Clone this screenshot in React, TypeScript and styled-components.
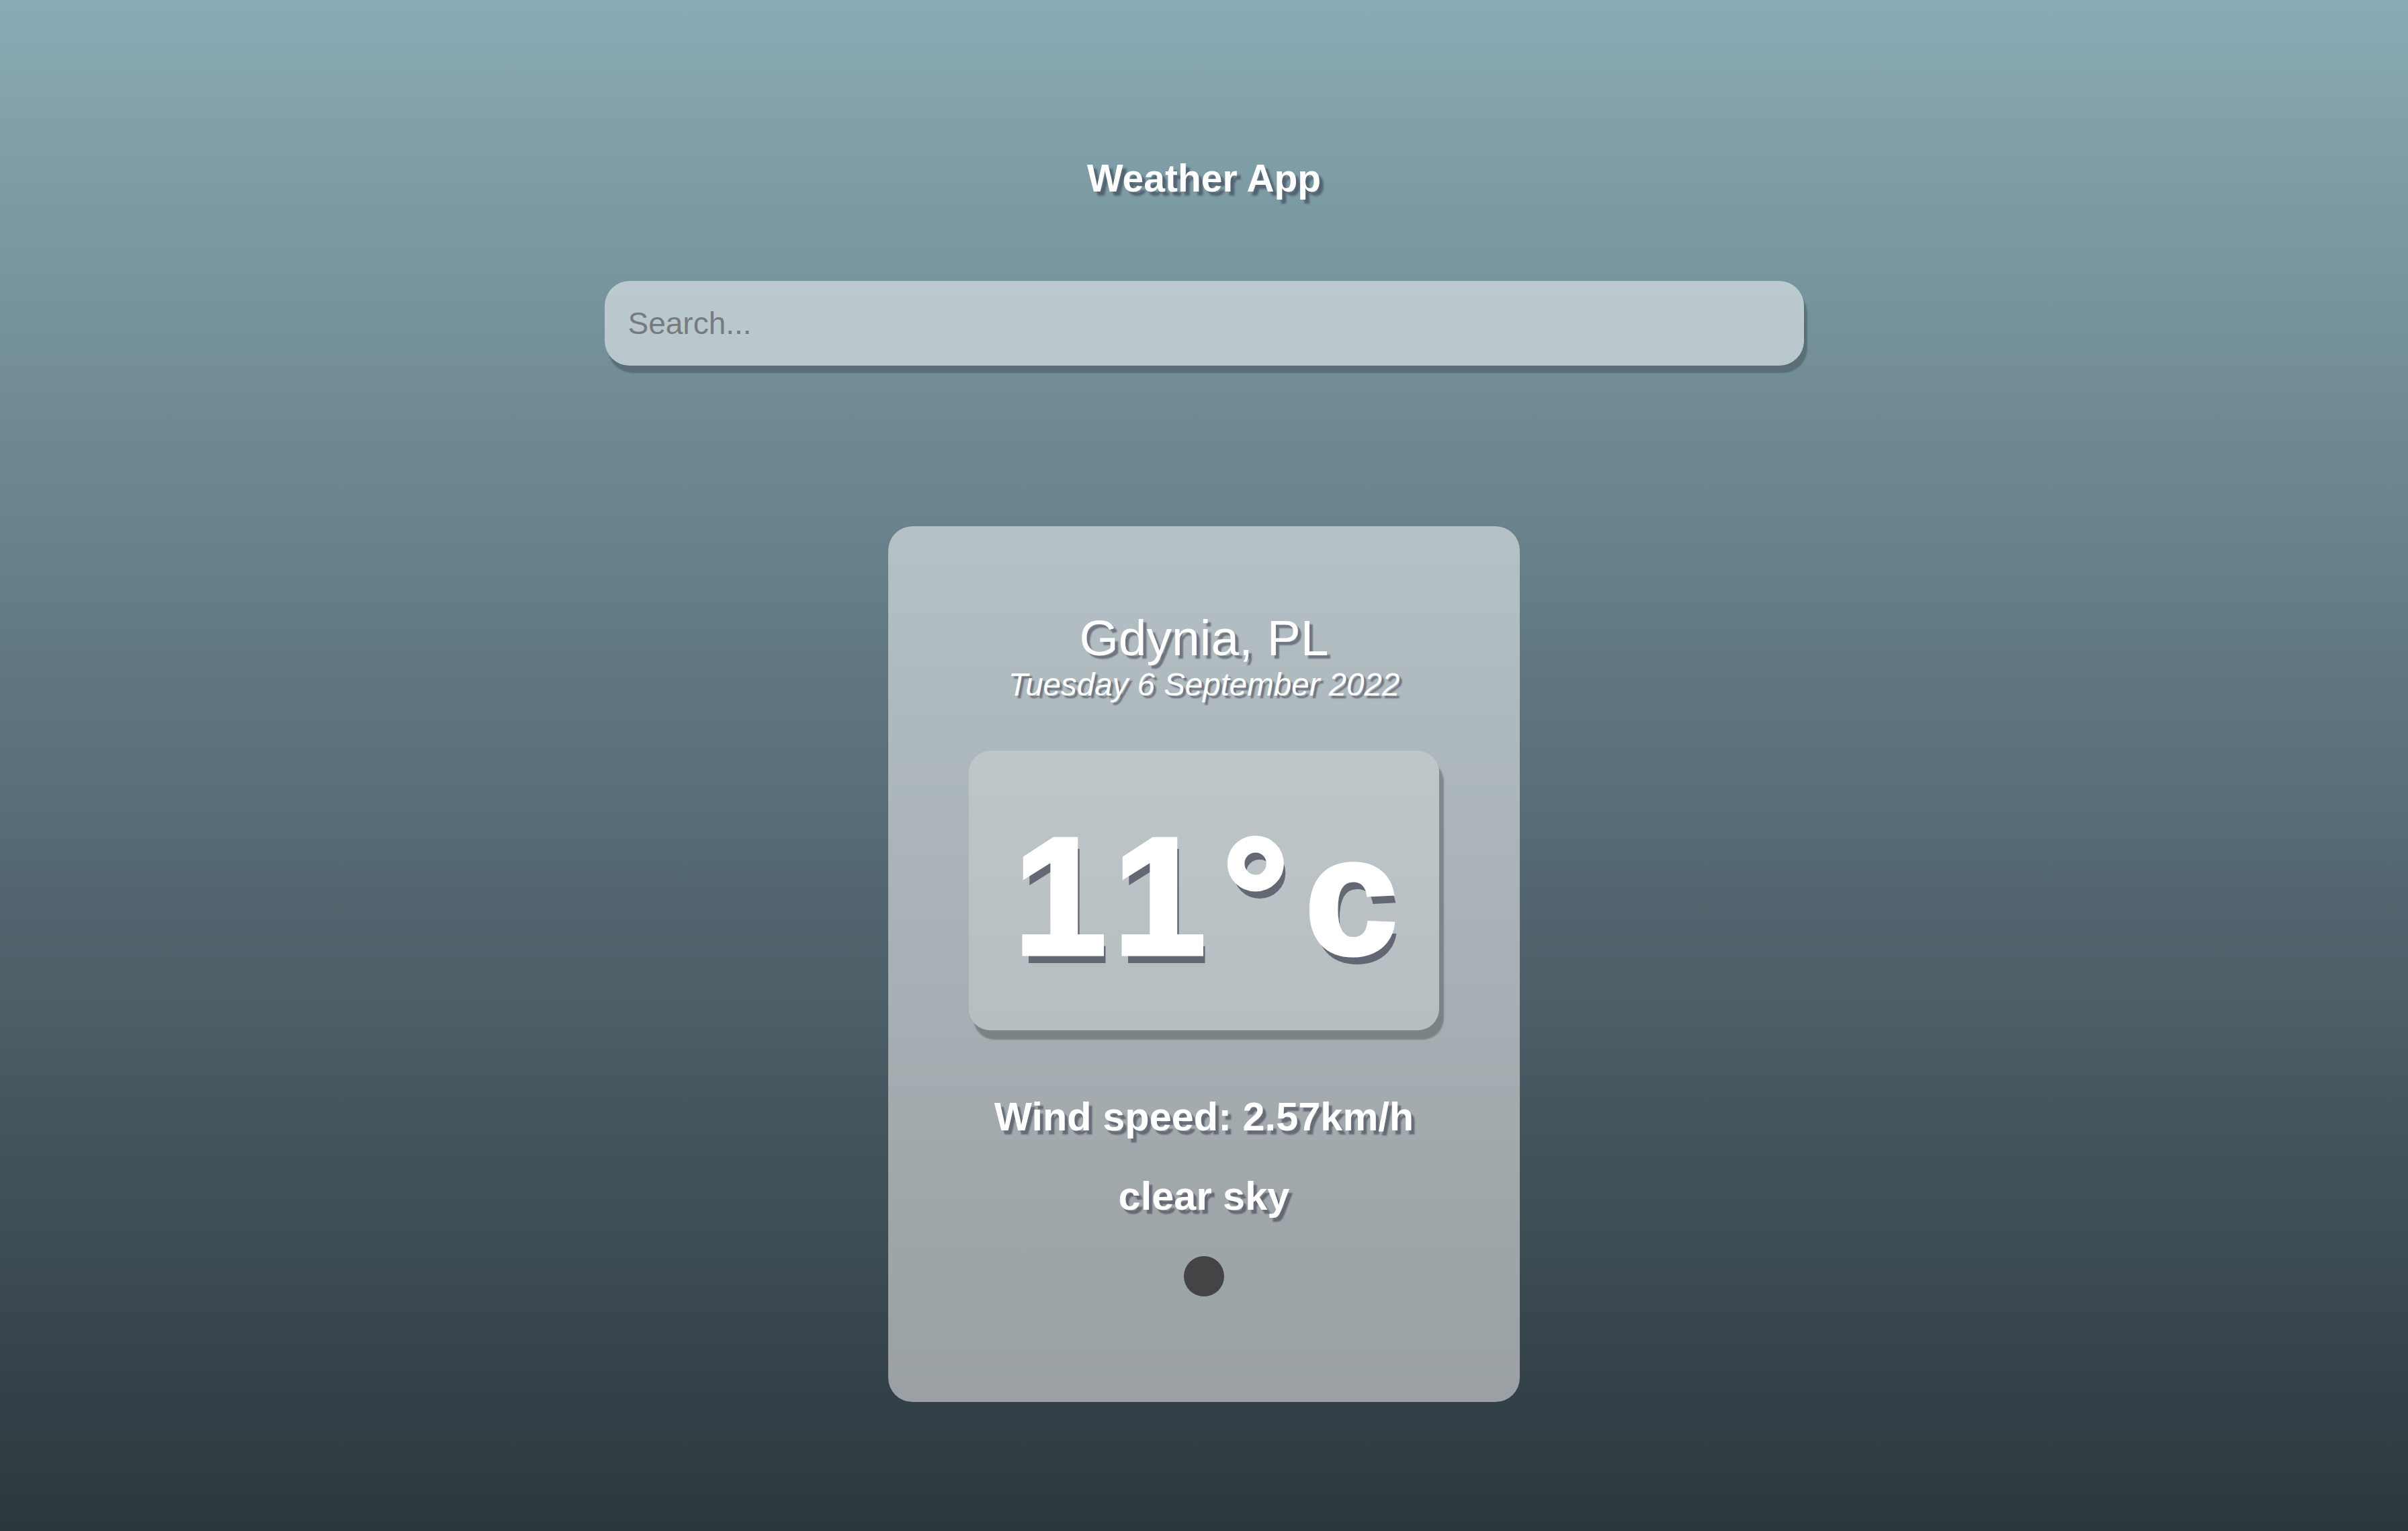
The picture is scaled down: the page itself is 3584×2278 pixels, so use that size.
import React from "react";
import styled, { createGlobalStyle } from "styled-components";

const GlobalStyle = createGlobalStyle`
  html, body {
    margin: 0;
    padding: 0;
  }
  body {
    font-family: "Liberation Sans", Arial, sans-serif;
    color: #ffffff;
  }
  * {
    box-sizing: border-box;
  }
`;

const Page = styled.main`
  min-height: 100vh;
  display: flex;
  flex-direction: column;
  align-items: center;
  padding-top: 232px;
  background: linear-gradient(180deg, #89aab4 0%, #2c363d 100%);
`;

const Title = styled.h1`
  margin: 0;
  font-size: 57px;
  line-height: 66px;
  font-weight: 700;
  color: #ffffff;
  text-shadow: 6px 6px 3px rgba(30, 30, 50, 0.45);
`;

const SearchInput = styled.input`
  margin-top: 120px;
  width: 1785px;
  height: 126px;
  border: none;
  outline: none;
  border-radius: 37px;
  padding: 0 35px;
  background: rgba(255, 255, 255, 0.5);
  box-shadow: 5px 11px 2px rgba(0, 0, 0, 0.22);
  font-family: "Liberation Sans", Arial, sans-serif;
  font-size: 46px;
  color: #333a40;

  &::placeholder {
    color: #777b80;
  }
`;

const Card = styled.section`
  margin-top: 239px;
  width: 940px;
  padding: 123px 120px 157px;
  border-radius: 36px;
  background: rgba(255, 255, 255, 0.5);
  display: flex;
  flex-direction: column;
  align-items: center;
`;

const Location = styled.h2`
  margin: 0;
  font-size: 75px;
  line-height: 1.15;
  font-weight: 400;
  text-shadow: 5px 5px 2px rgba(30, 30, 50, 0.45);
`;

const DateLine = styled.div`
  font-size: 47.5px;
  line-height: 1.12;
  font-style: italic;
  text-shadow: 4px 4px 2px rgba(30, 30, 50, 0.45);
`;

const TempBox = styled.div`
  margin-top: 72px;
  align-self: stretch;
  height: 416px;
  padding-top: 18px;
  border-radius: 32px;
  background: rgba(255, 255, 255, 0.2);
  box-shadow: 7px 14px 2px rgba(0, 0, 0, 0.25);
  display: flex;
  align-items: center;
  justify-content: center;
`;

const Temp = styled.div`
  font-family: "Liberation Sans", Arial, sans-serif;
  font-size: 246px;
  line-height: 1;
  font-weight: 700;
  letter-spacing: 25px;
  padding-left: 30px;
  color: #ffffff;
  -webkit-text-stroke: 7px #ffffff;
  text-shadow: 6px 14px 0 rgba(30, 30, 50, 0.55);
`;

const Detail = styled.p<{ $gap: number }>`
  margin: ${(p) => p.$gap}px 0 0;
  font-size: 59.5px;
  line-height: 1.12;
  font-weight: 700;
  text-shadow: 5px 6px 2px rgba(30, 30, 50, 0.45);
`;

const WeatherIcon = styled.div`
  margin-top: 55px;
  width: 60px;
  height: 60px;
  border-radius: 50%;
  background: #444446;
`;

export default function App() {
  return (
    <>
      <GlobalStyle />
      <Page>
        <Title>Weather App</Title>
        <SearchInput type="text" placeholder="Search..." />
        <Card>
          <Location>Gdynia, PL</Location>
          <DateLine>Tuesday 6 September 2022</DateLine>
          <TempBox>
            <Temp>11°c</Temp>
          </TempBox>
          <Detail $gap={96}>Wind speed: 2.57km/h</Detail>
          <Detail $gap={51}>clear sky</Detail>
          <WeatherIcon />
        </Card>
      </Page>
    </>
  );
}
